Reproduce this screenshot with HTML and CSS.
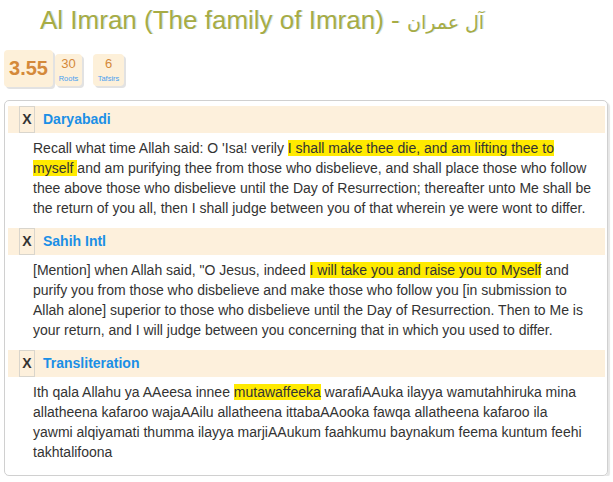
FILE: index.html
```html
<!DOCTYPE html>
<html>
<head>
<meta charset="utf-8">
<link rel="stylesheet" href="styles.css">
</head>
<body>
<h1 class="title">Al Imran (The family of Imran) - <span class="ar">آل عمران</span></h1>
<div class="badges">
  <div class="badge badge-main">3.55</div>
  <div class="badge badge-small"><span class="num">30</span><span class="lbl">Roots</span></div>
  <div class="badge badge-small badge-gap"><span class="num">6</span><span class="lbl">Tafsirs</span></div>
</div>
<div class="panel">
  <div class="section">
    <div class="head"><span class="close">X</span><span class="name">Daryabadi</span></div>
    <p class="text">Recall what time Allah said: O 'Isa! verily <mark>I shall make thee die, and am lifting thee to myself </mark>and am purifying thee from those who disbelieve, and shall place those who follow thee above those who disbelieve until the Day of Resurrection; thereafter unto Me shall be the return of you all, then I shall judge between you of that wherein ye were wont to differ.</p>
  </div>
  <div class="section">
    <div class="head"><span class="close">X</span><span class="name">Sahih Intl</span></div>
    <p class="text">[Mention] when Allah said, "O Jesus, indeed <mark>I will take you and raise you to Myself</mark> and purify you from those who disbelieve and make those who follow you [in submission to Allah alone] superior to those who disbelieve until the Day of Resurrection. Then to Me is your return, and I will judge between you concerning that in which you used to differ.</p>
  </div>
  <div class="section">
    <div class="head"><span class="close">X</span><span class="name">Transliteration</span></div>
    <p class="text text-translit">Ith qala Allahu ya AAeesa innee <mark>mutawaffeeka</mark> warafiAAuka ilayya wamutahhiruka mina allatheena kafaroo wajaAAilu allatheena ittabaAAooka fawqa allatheena kafaroo ila yawmi alqiyamati thumma ilayya marjiAAukum faahkumu baynakum feema kuntum feehi takhtalifoona</p>
  </div>
</div>
</body>
</html>
```
FILE: styles.css
```css
html, body {
  margin: 0;
  padding: 0;
  background: #fff;
}
body {
  font-family: "Liberation Sans", Arial, sans-serif;
  color: #333;
}
.title {
  margin: 0;
  padding: 4px 0 0 40px;
  height: 47px;
  box-sizing: border-box;
  font-size: 26px;
  font-weight: normal;
  line-height: 32px;
  color: #a7ac45;
  text-shadow: 1px 0 0 #cfe6f2;
  white-space: nowrap;
}
.ar {
  font-family: "DejaVu Sans", sans-serif;
  font-size: 19px;
}
.badges {
  display: flex;
  align-items: flex-start;
  padding-left: 4px;
  height: 50px;
  margin-top: 3px;
}
.badge {
  background: #fdf0d9;
  border-radius: 4px;
  box-shadow: 2px 2px 0 #e2e2e2;
  color: #d4893a;
  box-sizing: border-box;
}
.badge-main {
  width: 49px;
  height: 37px;
  font-size: 20px;
  font-weight: bold;
  line-height: 37px;
  text-align: center;
}
.badge-small {
  margin-top: 4px;
  margin-left: 2px;
  width: 27px;
  height: 32px;
  display: flex;
  flex-direction: column;
  align-items: center;
}
.badge-gap {
  margin-left: 11px;
  width: 31px;
}
.num {
  font-size: 13px;
  line-height: 14px;
  margin-top: 3px;
}
.lbl {
  font-size: 7.5px;
  line-height: 10px;
  margin-top: 3px;
  color: #4a9ff0;
}
.panel {
  margin: 0 0 0 4px;
  width: 604px;
  height: 376px;
  box-sizing: border-box;
  border: 1px solid #d0d0d0;
  border-radius: 5px;
  box-shadow: 2px 2px 1px #e6e6e6;
  padding: 5px 2px 0 3px;
}
.head {
  display: flex;
  align-items: stretch;
  height: 27px;
  background: #fdf0dc;
  padding-left: 11px;
}
.close {
  width: 16px;
  box-sizing: border-box;
  border: 1px solid #d9d5cc;
  font-weight: bold;
  font-size: 14px;
  line-height: 25px;
  text-align: center;
  color: #333;
}
.name {
  margin-left: 8px;
  font-weight: bold;
  font-size: 14px;
  line-height: 27px;
  color: #1b8fe6;
}
.text {
  margin: 5px 0 10px 0;
  padding: 0 13px 0 25px;
  font-size: 14px;
  line-height: 20px;
  color: #333;
}
.text-translit {
  padding-right: 16px;
}
mark {
  background: #ffea00;
  color: #333;
}
```
